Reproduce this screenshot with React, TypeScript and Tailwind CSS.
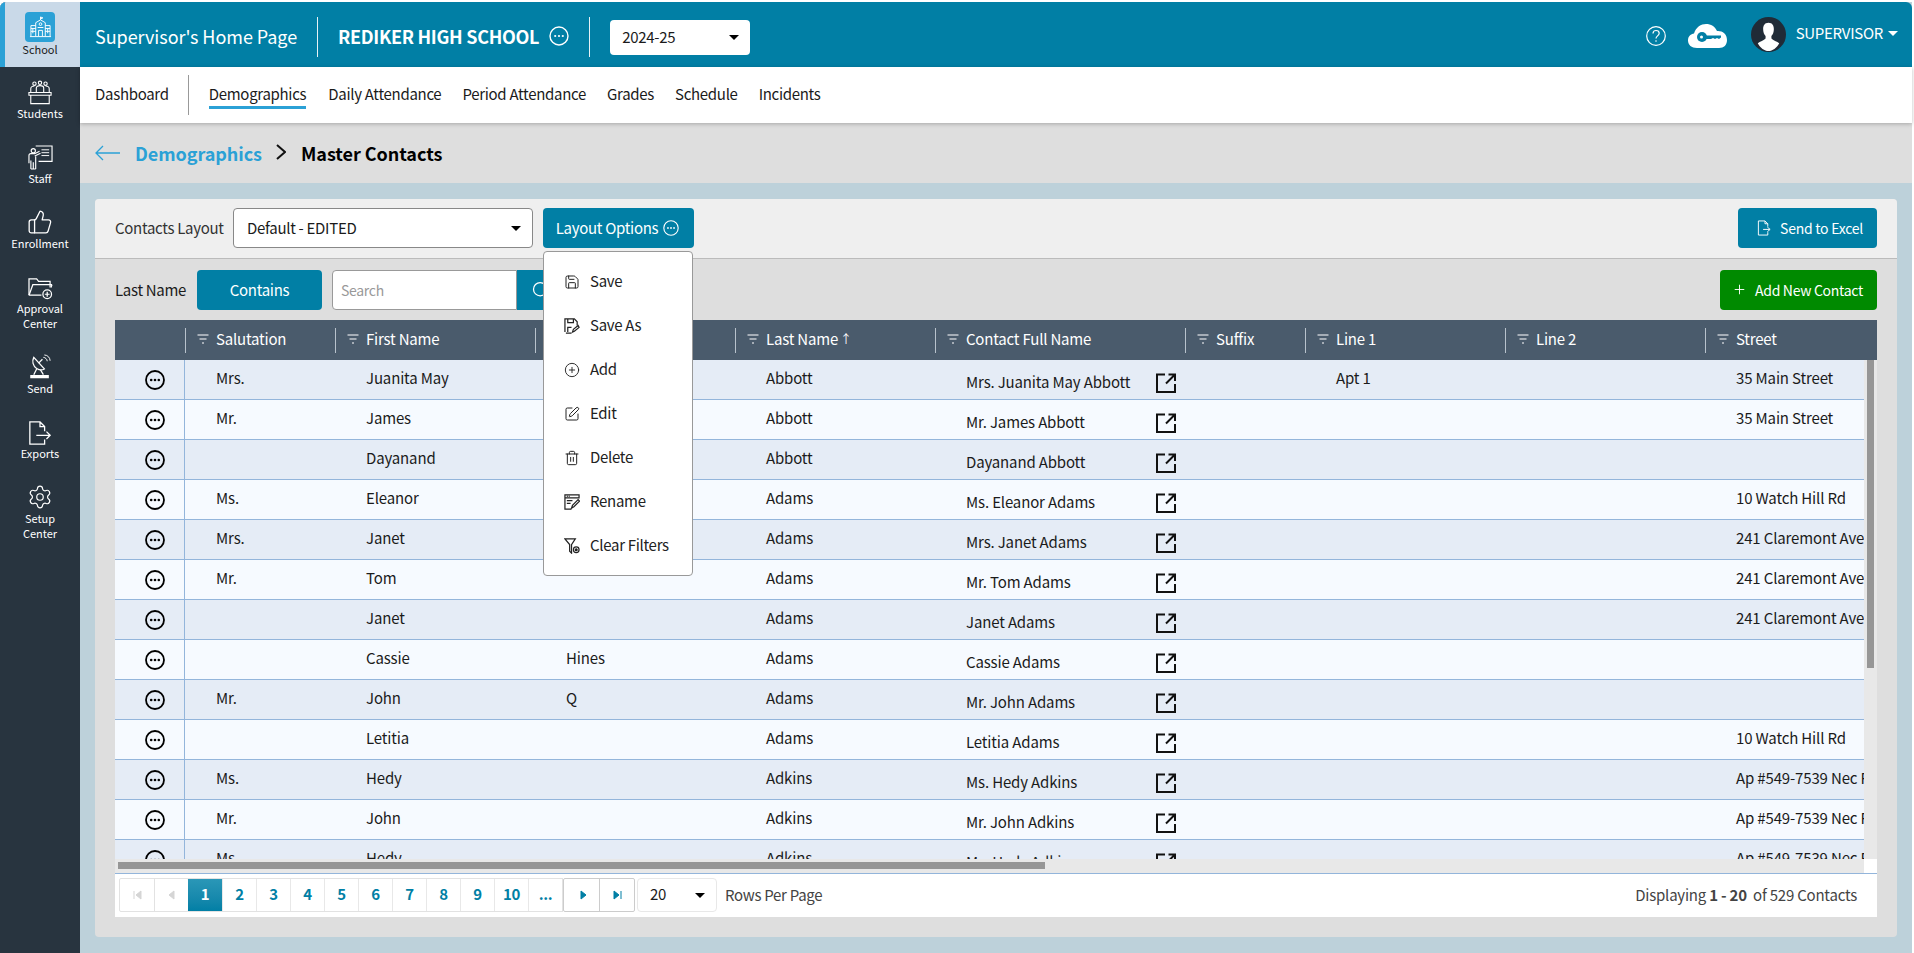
import React from "react";
import { Settings, ThumbsUp, Trash2, SquarePen, CirclePlus, Save, Plus, Search } from "lucide-react";

const font = { fontFamily: '"Noto Sans CJK SC","Noto Sans",sans-serif' };

type IconProps = { className?: string };

const Dots = ({ className = "w-5 h-5", sw = 1.4, dot = 1.1 }: IconProps & { sw?: number; dot?: number }) => (
  <svg viewBox="0 0 20 20" className={className} fill="none" stroke="currentColor">
    <circle cx="10" cy="10" r="9" strokeWidth={sw} />
    <circle cx="6.2" cy="10" r={dot} fill="currentColor" stroke="none" />
    <circle cx="10" cy="10" r={dot} fill="currentColor" stroke="none" />
    <circle cx="13.8" cy="10" r={dot} fill="currentColor" stroke="none" />
  </svg>
);

const FilterLines = () => (
  <svg viewBox="0 0 12 10" className="w-3 h-[10px] shrink-0" stroke="currentColor" strokeWidth="1.2">
    <path d="M0.5 1H11.5M2.5 5H9.5M5 9H7" />
  </svg>
);

const ExtLink = () => (
  <svg viewBox="0 0 20 20" className="w-5 h-5 shrink-0 mt-[6px]" fill="none" stroke="#111" strokeWidth="2">
    <path d="M9 1.5H1V19H19V11" />
    <path d="M10 10.5L18.5 2M12.5 1.5H19V8" />
  </svg>
);

const Caret = ({ className = "border-t-black" }: IconProps) => (
  <span className={`inline-block w-0 h-0 border-x-[5px] border-x-transparent border-t-[5px] ${className}`} />
);

const SchoolIcon = () => (
  <svg viewBox="0 0 24 24" className="w-[23px] h-[23px]" fill="none" stroke="white" strokeWidth="1">
    <path d="M2 21V10h5M22 21V10h-5M7 21V7l5-3 5 3v14M1 21.5h22" />
    <path d="M12 4V1l2.5 1L12 3" />
    <circle cx="12" cy="8.5" r="1.4" />
    <path d="M10 21v-6h4v6M4 13v5M19.5 13v5M2 13h5M17 13h5M2 16h5M17 16h5" />
    <path d="M9 12h6" />
  </svg>
);

const StudentsIcon = () => (
  <svg viewBox="0 0 26 26" className="w-[24px] h-[25px]" fill="none" stroke="white" strokeWidth="1.2">
    <circle cx="7" cy="3.5" r="1.8" />
    <circle cx="13" cy="2.5" r="1.8" />
    <circle cx="19" cy="3.5" r="1.8" />
    <path d="M3 13V9c0-2 2-3 4-3M23 13V9c0-2-2-3-4-3M9 13V8c0-1.5 2-2.5 4-2.5s4 1 4 2.5v5" />
    <path d="M1 13h24v3H1zM3 16v9h20v-9" />
  </svg>
);

const StaffIcon = () => (
  <svg viewBox="0 0 26 26" className="w-[25px] h-[25px]" fill="none" stroke="white" strokeWidth="1.2">
    <path d="M8 1h17v16H11" />
    <path d="M14 5h8M14 8h8M14 11h8" strokeWidth="1" />
    <circle cx="5.5" cy="6" r="2.2" />
    <path d="M1 19v-8c0-1 1-2 2-2h4l5-2.5M7 11.5l6-3M3 25v-9M8 25v-13M3 25h5M5.5 25v-7" />
  </svg>
);

const FolderIcon = () => (
  <svg viewBox="0 0 26 24" className="w-[25px] h-[23px]" fill="none" stroke="white" strokeWidth="1.3">
    <path d="M1 19V2h8l2 2.5h12V11" />
    <path d="M1 19L5 8h20M25 8l-1 3M1 19h13" />
    <circle cx="20" cy="18" r="4.5" />
    <path d="M20 15.5v5M17.5 18h5" />
  </svg>
);

const DishIcon = () => (
  <svg viewBox="0 0 26 26" className="w-[25px] h-[26px]" fill="none" stroke="white" strokeWidth="1.3">
    <path d="M6 3c-2 4-1 9 3 11.5 3 1.8 6 1.8 8 .5L6 3z" />
    <path d="M11 9l4-4" />
    <path d="M16 3c2 0 4 2 4 4M17 0.5c3.5 0 6 3 6 6" strokeWidth="1" />
    <path d="M9 15l-3 6M13 16l3 5" />
    <path d="M3 22h18v2H3z" fill="white" />
  </svg>
);

const ExportIcon = () => (
  <svg viewBox="0 0 26 26" className="w-[24px] h-[24px]" fill="none" stroke="white" strokeWidth="1.4">
    <path d="M18 11V6l-5-5H2v24h16v-5M13 1v5h5" />
    <path d="M9 15.5h15M20 11.5l4 4-4 4" />
  </svg>
);

const SaveAsIcon = () => (
  <svg viewBox="0 0 17 17" className="w-4 h-4" fill="none" stroke="#222" strokeWidth="1.3">
    <path d="M1 15V1h10l3 3v4M8 16H2M4 1v4h6V1" />
    <path d="M4 15v-5h4M9 15l1-3 5-4 1 2-5 4z" />
  </svg>
);

const RenameIcon = () => (
  <svg viewBox="0 0 17 17" className="w-4 h-4" fill="none" stroke="#222" strokeWidth="1.3">
    <path d="M1 4h15V1H1v15h7M3 2.5h1M5 2.5h1" />
    <path d="M3 7h6M3 10h4M8 15l1-3 6-6 1.5 1.5-6 6z" />
  </svg>
);

const ClearFilterIcon = () => (
  <svg viewBox="0 0 17 17" className="w-4 h-4" fill="none" stroke="#222" strokeWidth="1.3">
    <path d="M1 1h11L8 7v9l-2-2V7z" />
    <circle cx="13" cy="12.5" r="3" />
    <circle cx="13" cy="12.5" r="1" fill="#222" />
  </svg>
);

const SendExcelIcon = () => (
  <svg viewBox="0 0 15 17" className="w-[15px] h-[16px]" fill="none" stroke="white" strokeWidth="1">
    <path d="M11 7V4L8 1H1v15h10v-3M8 1v3h3M6 10h7M10.5 7.5L13.5 10l-3 2.5" />
  </svg>
);

const CloudKey = () => (
  <svg viewBox="0 0 40 26" className="w-10 h-[26px]" fill="white">
    <path d="M9 25C3.5 25 0 22 0 17.5 0 13 3 11 6 10.5 8 4 13 1 18 1c5 0 9 2.5 11 7 5-.5 10 2.5 10 9 0 5-3 8-8 8z" />
    <circle cx="14" cy="14" r="5" fill="#017fa5" />
    <path d="M16 12.5h17v2l-2 1.5-2-1-2 1-2-1-2 1h-7z" fill="#017fa5" />
    <circle cx="13.5" cy="14" r="1.5" fill="white" />
  </svg>
);

const Avatar = () => (
  <svg viewBox="0 0 36 36" className="w-[35px] h-[35px]">
    <circle cx="18" cy="18" r="18" fill="#202b37" />
    <path d="M18 6c-4 0-5.5 3-5.5 6.5 0 3 1 5.5 2.5 7v2.500c-1.500 2-6 3-8 5 2.500 5 7 8 11 8s8.500-3 11-8c-2-2-6.500-3-8-5v-2.500c1.500-1.500 2.500-4 2.500-7C23.500 9 22 6 18 6z" fill="white" />
  </svg>
);

const HelpIcon = () => (
  <svg viewBox="0 0 20 20" className="w-5 h-5" fill="none" stroke="white" strokeWidth="1.2">
    <circle cx="10" cy="10" r="9.3" />
    <path d="M7 7.5C7 5.5 8.5 4.5 10 4.5c2 0 3.2 1.3 3.2 2.8 0 2.5-3.2 2.700-3.2 5.200" />
    <circle cx="10" cy="15" r=".8" fill="white" stroke="none" />
  </svg>
);

const nav: { label: string[]; icon: React.ReactNode; h: string }[] = [
  { label: ["Students"], icon: <StudentsIcon />, h: "h-[65px]" },
  { label: ["Staff"], icon: <StaffIcon />, h: "h-[65px]" },
  { label: ["Enrollment"], icon: <ThumbsUp className="w-[26px] h-[26px]" strokeWidth={1.2} color="white" />, h: "h-[65px]" },
  { label: ["Approval", "Center"], icon: <FolderIcon />, h: "h-[80px]" },
  { label: ["Send"], icon: <DishIcon />, h: "h-[65px]" },
  { label: ["Exports"], icon: <ExportIcon />, h: "h-[65px]" },
  { label: ["Setup", "Center"], icon: <Settings className="w-[26px] h-[26px]" strokeWidth={1.1} color="white" />, h: "h-[80px]" },
];

const columns = [
  { name: "", w: "w-[70px]" },
  { name: "Salutation", w: "w-[150px]" },
  { name: "First Name", w: "w-[200px]" },
  { name: "Middle Name", w: "w-[200px]" },
  { name: "Last Name", w: "w-[200px]", sort: true },
  { name: "Contact Full Name", w: "w-[250px]" },
  { name: "Suffix", w: "w-[120px]" },
  { name: "Line 1", w: "w-[200px]" },
  { name: "Line 2", w: "w-[200px]" },
  { name: "Street", w: "w-[200px]" },
];

const ap = "Ap #549-7539 Nec Rd";
const cl = "241 Claremont Ave";
const rows: [string, string, string, string, string, string, string][] = [
  ["Mrs.", "Juanita May", "", "Abbott", "Mrs. Juanita May Abbott", "Apt 1", "35 Main Street"],
  ["Mr.", "James", "", "Abbott", "Mr. James Abbott", "", "35 Main Street"],
  ["", "Dayanand", "", "Abbott", "Dayanand Abbott", "", ""],
  ["Ms.", "Eleanor", "", "Adams", "Ms. Eleanor Adams", "", "10 Watch Hill Rd"],
  ["Mrs.", "Janet", "", "Adams", "Mrs. Janet Adams", "", cl],
  ["Mr.", "Tom", "", "Adams", "Mr. Tom Adams", "", cl],
  ["", "Janet", "", "Adams", "Janet Adams", "", cl],
  ["", "Cassie", "Hines", "Adams", "Cassie Adams", "", ""],
  ["Mr.", "John", "Q", "Adams", "Mr. John Adams", "", ""],
  ["", "Letitia", "", "Adams", "Letitia Adams", "", "10 Watch Hill Rd"],
  ["Ms.", "Hedy", "", "Adkins", "Ms. Hedy Adkins", "", ap],
  ["Mr.", "John", "", "Adkins", "Mr. John Adkins", "", ap],
  ["Ms.", "Hedy", "", "Adkins", "Ms. Hedy Adkins", "", ap],
];

const menu: { label: string; icon: React.ReactNode }[] = [
  { label: "Save", icon: <Save className="w-[18px] h-[18px]" strokeWidth={1.5} color="#222" /> },
  { label: "Save As", icon: <SaveAsIcon /> },
  { label: "Add", icon: <CirclePlus className="w-[18px] h-[18px]" strokeWidth={1.4} color="#222" /> },
  { label: "Edit", icon: <SquarePen className="w-[18px] h-[18px]" strokeWidth={1.5} color="#222" /> },
  { label: "Delete", icon: <Trash2 className="w-[18px] h-[18px]" strokeWidth={1.5} color="#222" /> },
  { label: "Rename", icon: <RenameIcon /> },
  { label: "Clear Filters", icon: <ClearFilterIcon /> },
];

const Cell = ({ w, children }: { w: string; children?: React.ReactNode }) => (
  <div className={`${w} shrink-0 pl-[31px] pb-[3px] whitespace-nowrap overflow-hidden`}>{children}</div>
);

const pages = ["1", "2", "3", "4", "5", "6", "7", "8", "9", "10", "..."];

export default function App() {
  return (
    <div style={font} className="w-[1914px] h-[953px] overflow-hidden bg-white pt-[2px] pr-[2px] flex text-[15px] leading-5 tracking-[-0.3px] text-[#1b1b1b]">
      <aside className="w-20 shrink-0 bg-[#28343f] text-white flex flex-col rounded-tl-md overflow-hidden tracking-normal">
        <div className="h-[65px] shrink-0 bg-[#c9d9e8] border-l-[5px] border-[#2ba1d6] flex flex-col items-center pt-[10px] pr-[5px] text-[#1b1b1b]">
          <div className="w-[30px] h-[30px] rounded-[4px] bg-[#2ba1d6] flex items-center justify-center"><SchoolIcon /></div>
          <div className="text-[11px] leading-4 -mt-[1px]">School</div>
        </div>
        {nav.map((n) => (
          <div key={n.label[0]} className={`${n.h} shrink-0 flex flex-col items-center pt-[12px]`}>
            <div className="h-[26px] flex items-end justify-center">{n.icon}</div>
            <div className="mt-[1px] text-[11px] leading-[15px] text-center">
              {n.label.map((l) => <div key={l}>{l}</div>)}
            </div>
          </div>
        ))}
      </aside>

      <main className="flex-1 min-w-0 flex flex-col bg-[#bdd1da]">
        <header className="h-[65px] shrink-0 bg-[#017fa5] rounded-tr-md flex items-center text-white">
          <div className="ml-[15px] text-[18px] leading-6 tracking-[-0.05px] w-[222px] whitespace-nowrap mt-[2px]">Supervisor's Home Page</div>
          <div className="w-px h-10 bg-white/90 mt-1" />
          <div className="ml-[20px] text-[18px] leading-6 font-semibold whitespace-nowrap mt-[2px]">REDIKER HIGH SCHOOL</div>
          <Dots className="w-5 h-5 ml-[10px] mt-[3px]" />
          <div className="w-px h-10 bg-white/90 ml-[20px] mt-1" />
          <div className="ml-5 mt-[6px] w-[140px] h-[35px] rounded-[4px] bg-white text-[#1b1b1b] flex items-center justify-between pl-3 pr-[11px]">
            <span className="pb-[1px]">2024-25</span><Caret />
          </div>
          <div className="ml-auto flex items-center">
            <span className="mt-[3px]"><HelpIcon /></span>
            <div className="ml-[22px] mt-[3px]"><CloudKey /></div>
            <div className="ml-[23px]"><Avatar /></div>
            <span className="ml-[10px] mb-[3px]">SUPERVISOR</span>
            <Caret className="border-t-white ml-[5px] mb-[3px] mr-[14px]" />
          </div>
        </header>

        <nav className="h-[56px] shrink-0 bg-white flex items-center shadow-[0_1px_4px_rgba(0,0,0,0.25)] z-10 pl-[15px] pb-[3px]">
          <span>Dashboard</span>
          <div className="w-px h-10 bg-[#999] ml-[19px] mt-[3px]" />
          <span className="ml-5 relative">Demographics
            <span className="absolute left-0 right-0 -bottom-[5px] h-[3px] bg-[#2ba1d6]" />
          </span>
          <div className="flex gap-[21px] ml-[22px]">
            <span>Daily Attendance</span>
            <span>Period Attendance</span>
            <span>Grades</span>
            <span>Schedule</span>
            <span>Incidents</span>
          </div>
        </nav>

        <div className="h-[60px] shrink-0 bg-[#dedede] flex items-center pl-[15px] tracking-[-0.05px]">
          <svg viewBox="0 0 26 16" className="w-[26px] h-4" fill="none" stroke="#2ba1d6" strokeWidth="1.3"><path d="M25 8H1M8 1L1 8l7 7" /></svg>
          <span className="ml-[14px] text-[18px] font-semibold text-[#2ba1d6]">Demographics</span>
          <svg viewBox="0 0 10 16" className="w-[10px] h-4 ml-[14px] mb-[3px]" fill="none" stroke="#111" strokeWidth="2"><path d="M1 1l8 7-8 7" /></svg>
          <span className="ml-[15px] text-[18px] font-semibold text-black">Master Contacts</span>
        </div>

        <div className="flex-1 min-h-0 px-[15px] pt-4 pb-4">
          <section className="h-full bg-[#dedede] rounded-[4px] flex flex-col">
            <div className="h-[60px] shrink-0 bg-[#efefef] rounded-t-[4px] border-b border-[#bbb] flex items-center px-5 pb-px">
              <span className="text-[#333] w-[118px]">Contacts Layout</span>
              <div className="w-[300px] h-10 rounded-[4px] border border-[#888] bg-white flex items-center justify-between pl-[13px] pr-[11px]">
                <span>Default - EDITED</span><Caret />
              </div>
              <div className="relative ml-[10px]">
                <button className="w-[151px] h-10 rounded-[4px] bg-[#017fa5] text-white flex items-center justify-center gap-[5px] pr-[2px]">
                  Layout Options <Dots className="w-4 h-4" />
                </button>
                <div className="absolute z-20 left-0 top-[43px] w-[150px] h-[325px] bg-white border border-[#999] rounded-[4px] py-2">
                  {menu.map((m) => (
                    <div key={m.label} className="h-11 flex items-center pl-5 pb-[3px] gap-[10px] text-[#222]">
                      <span className="w-4 flex justify-center mt-[3px]">{m.icon}</span>{m.label}
                    </div>
                  ))}
                </div>
              </div>
              <button className="ml-auto w-[139px] h-10 rounded-[4px] bg-[#017fa5] text-white text-[14px] tracking-[-0.25px] flex items-center justify-center gap-2 pl-[5px]">
                <SendExcelIcon /> Send to Excel
              </button>
            </div>

            <div className="h-[61px] shrink-0 flex items-center px-5">
              <span className="w-[82px]">Last Name</span>
              <button className="w-[125px] h-10 rounded-[4px] bg-[#017fa5] text-white">Contains</button>
              <div className="ml-[10px] w-[185px] h-10 bg-white border border-[#999] rounded-l-[4px] flex items-center pl-2 text-[#999] text-[14px]">Search</div>
              <div className="w-[40px] h-10 bg-[#017fa5] flex items-center pl-[14px] text-white">
                <Search className="w-5 h-5" strokeWidth={1.5} />
              </div>
              <button className="ml-auto w-[157px] h-10 rounded-[4px] bg-[#008a00] text-white text-[14px] tracking-[-0.3px] flex items-center justify-center gap-2 pr-[2px]">
                <Plus className="w-[15px] h-[15px]" strokeWidth={1.5} /> Add New Contact
              </button>
            </div>

            <div className="mx-5 w-[1762px] shrink-0 flex flex-col">
              <div className="h-10 bg-[#4a5b6c] text-white flex overflow-hidden tracking-[-0.2px]">
                {columns.map((c, i) => (
                  <div key={i} className={`${c.w} shrink-0 h-full flex items-center ${i ? "pl-[12px]" : ""} relative whitespace-nowrap`}>
                    {i > 0 && <span className="absolute left-0 top-2 h-[25px] w-px bg-[#b8c2cc]" />}
                    {i > 0 && <span className="flex items-center gap-[7px] pb-[3px]"><FilterLines />{c.name}{c.sort && <span className="text-[12px] -ml-[5px]">↑</span>}</span>}
                  </div>
                ))}
              </div>
              <div className="flex h-[499px]">
                <div className="flex-1 min-w-0 overflow-hidden tracking-[-0.15px]">
                  {rows.map((r, i) => (
                    <div key={i} className={`h-10 flex items-center border-b border-[#93b5db] ${i % 2 ? "bg-[#f6faff]" : "bg-[#e5ecf6]"}`}>
                      <div className="w-[70px] h-full shrink-0 border-r border-[#93b5db] flex items-center justify-center text-black pl-[10px] pt-px">
                        <Dots className="w-5 h-5" sw={1.8} dot={1.3} />
                      </div>
                      <Cell w="w-[150px]">{r[0]}</Cell>
                      <Cell w="w-[200px]">{r[1]}</Cell>
                      <Cell w="w-[200px]">{r[2]}</Cell>
                      <Cell w="w-[200px]">{r[3]}</Cell>
                      <div className="w-[250px] shrink-0 pl-[31px] pr-[9px] flex items-center justify-between">
                        <span className="pt-[5px] whitespace-nowrap">{r[4]}</span><ExtLink />
                      </div>
                      <div className="w-[120px] shrink-0" />
                      <Cell w="w-[200px]">{r[5]}</Cell>
                      <div className="w-[200px] shrink-0" />
                      <div className="w-[200px] shrink-0 pl-[31px] pb-[3px] whitespace-nowrap">{r[6]}</div>
                    </div>
                  ))}
                </div>
                <div className="w-[13px] shrink-0 bg-[#e8e8e8] px-[3px]">
                  <div className="h-[308px] bg-[#969696]" />
                </div>
              </div>
              <div className="h-[14px] flex">
                <div className="flex-1 bg-[#e8e8e8] px-[3px] py-[3px]">
                  <div className="w-[927px] h-[7px] bg-[#969696]" />
                </div>
                <div className="w-[13px] bg-white" />
              </div>
              <div className="h-[44px] bg-white border-t border-[#93b5db] flex items-center pl-1 pr-5 pb-[1px]">
                <div className="flex h-[34px] border border-[#e2e2e2] rounded-[2px]">
                  {["M1 1v8M8 1L3 5l5 4z", "M7 1L2 5l5 4z"].map((d, i) => (
                    <div key={i} className={`w-[34px] flex items-center justify-center ${i ? "border-l border-[#e2e2e2]" : ""}`}>
                      <svg viewBox="0 0 9 10" className="w-[9px] h-[10px]"><path d={d} fill="#d5d5d5" stroke="#d5d5d5" /></svg>
                    </div>
                  ))}
                </div>
                <div className="flex h-[34px] border-y border-r border-[#e2e2e2] -ml-px">
                  {pages.map((p, i) => (
                    <div key={p} className={`w-[34px] flex items-center justify-center pb-[2px] font-semibold text-[#017fa5] ${i === 0 ? "bg-gradient-to-b from-[#2a97b7] to-[#017fa5] text-white" : "border-l border-[#e8e8e8]"}`}>{p}</div>
                  ))}
                </div>
                <div className="flex h-[34px] border border-[#ccc] rounded-[2px]">
                  {["M2 1l5 4-5 4z", "M1 1l5 4-5 4zM8 1v8"].map((d, i) => (
                    <div key={i} className={`w-[35px] flex items-center justify-center ${i ? "border-l border-[#ccc]" : "pl-[3px]"}`}>
                      <svg viewBox="0 0 9 10" className="w-[9px] h-[10px]"><path d={d} fill="#017fa5" stroke="#017fa5" /></svg>
                    </div>
                  ))}
                </div>
                <div className="ml-[2px] w-[80px] h-[34px] border border-[#e8e8e8] rounded-[4px] flex items-center justify-between pl-3 pr-[11px]">
                  <span className="pb-[2px]">20</span><Caret />
                </div>
                <span className="ml-2 text-[#444] pb-[1px]">Rows Per Page</span>
                <span className="ml-auto text-[#444] pb-[1px] whitespace-pre tracking-[-0.22px]">Displaying <b className="font-semibold">1 - 20 </b> of 529 Contacts</span>
              </div>
            </div>
          </section>
        </div>
      </main>
    </div>
  );
}
